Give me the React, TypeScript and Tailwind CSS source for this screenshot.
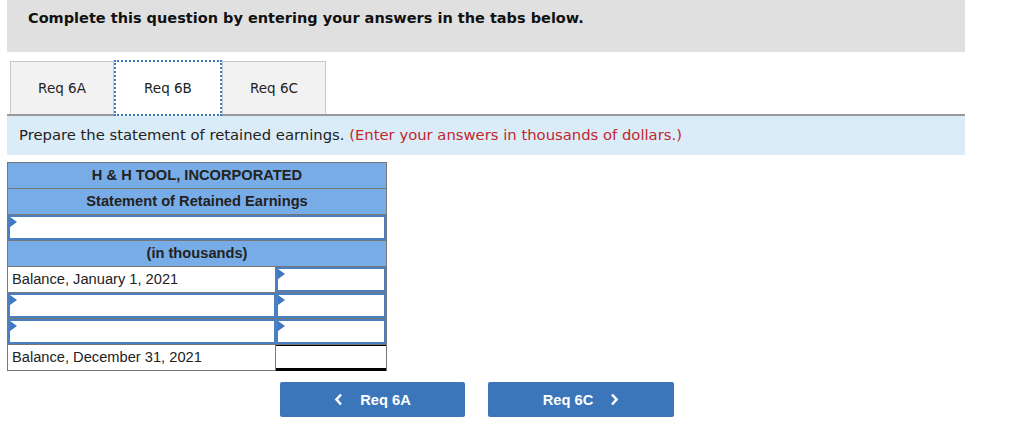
import React from "react";

const Tri = () => (
  <span className="absolute left-0 top-0 w-0 h-0 border-t-[5px] border-b-[5px] border-l-[7px] border-t-transparent border-b-transparent border-l-[#3d78c0]" />
);

const InputCell = ({ cls }: { cls: string }) => (
  <div className={`relative border-2 border-[#4a7fc1] bg-white ${cls}`}>
    <Tri />
  </div>
);

const ChevL = () => (
  <svg width="9" height="13" viewBox="0 0 9 13" className="mr-[17px]">
    <path d="M7 1.5 L2.5 6.5 L7 11.5" fill="none" stroke="white" strokeWidth="2.6" />
  </svg>
);
const ChevR = () => (
  <svg width="9" height="13" viewBox="0 0 9 13" className="ml-[17px]">
    <path d="M2 1.5 L6.5 6.5 L2 11.5" fill="none" stroke="white" strokeWidth="2.6" />
  </svg>
);

export default function App() {
  const verdana = { fontFamily: '"DejaVu Sans", Verdana, sans-serif' };
  const arial = { fontFamily: '"Liberation Sans", Arial, sans-serif' };
  return (
    <div className="w-[1034px] h-[435px] bg-white relative" style={verdana}>
      <div className="ml-[7px] w-[958px] h-[52px] bg-[#e0e0e0] pl-[21px] pt-[8px]">
        <div className="text-[14.5px] font-bold text-[#111]">
          Complete this question by entering your answers in the tabs below.
        </div>
      </div>
      <div className="ml-[7px] w-[958px] mt-[9px]">
        <div className="flex pl-[3px] h-[53px]">
          <div className="w-[104px] h-[53px] bg-[#f2f2f2] border border-[#c8c8c8] border-b-0 flex items-center justify-center text-[13.5px] text-[#222]">
            Req 6A
          </div>
          <div className="w-[108px] h-[56px] -mt-[1px] bg-white border-2 border-dotted border-[#3a78c4] flex items-center justify-center text-[13.5px] text-[#222] relative z-10">
            Req 6B
          </div>
          <div className="w-[104px] h-[53px] bg-[#f2f2f2] border border-[#c8c8c8] border-b-0 flex items-center justify-center text-[13.5px] text-[#222]">
            Req 6C
          </div>
        </div>
        <div className="border-t-2 border-[#999] bg-[#dbecf9] h-[41px] pl-[12px] flex items-center text-[14.8px] text-[#222]">
          <span>Prepare the statement of retained earnings.&nbsp;</span>
          <span className="text-[#c1272d]">(Enter your answers in thousands of dollars.)</span>
        </div>
      </div>

      <div className="ml-[7px] mt-[7px] w-[380px] border border-[#777] border-b-0" style={arial}>
        <div className="h-[26px] bg-[#78ace6] border-b border-[#777] flex items-center justify-center text-[14.67px] font-bold text-[#222] pb-[1px]">
          H &amp; H TOOL, INCORPORATED
        </div>
        <div className="h-[26px] bg-[#78ace6] border-b border-[#777] flex items-center justify-center text-[14.67px] font-bold text-[#222] pb-[1px]">
          Statement of Retained Earnings
        </div>
        <div className="h-[26px] border-b border-[#777] flex">
          <InputCell cls="flex-1" />
        </div>
        <div className="h-[26px] bg-[#78ace6] border-b border-[#777] flex items-center justify-center text-[14.67px] font-bold text-[#222] pb-[1px]">
          (in thousands)
        </div>
        <div className="h-[26px] border-b border-[#777] flex">
          <div className="w-[268px] border-r border-[#777] flex items-center pl-[4px] text-[14.67px] text-[#222] pb-[1px]">
            Balance, January 1, 2021
          </div>
          <InputCell cls="flex-1" />
        </div>
        <div className="h-[26px] border-b border-[#777] flex">
          <InputCell cls="w-[268px]" />
          <InputCell cls="flex-1" />
        </div>
        <div className="h-[26px] border-b border-[#777] flex">
          <InputCell cls="w-[268px]" />
          <InputCell cls="flex-1" />
        </div>
        <div className="h-[26px] border-b border-[#777] flex">
          <div className="w-[268px] border-r border-[#777] flex items-center pl-[4px] text-[14.67px] text-[#222] pb-[1px]">
            Balance, December 31, 2021
          </div>
          <div className="flex-1 border-t border-black border-b-[3px] border-b-double border-b-black -mb-[1px]" />
        </div>
      </div>

      <div className="flex mt-[11px] ml-[280px] gap-[23px]" style={arial}>
        <div className="w-[185px] h-[35px] bg-[#3a76b9] rounded-[2px] flex items-center justify-center text-white text-[14.67px] font-bold">
          <ChevL />Req 6A
        </div>
        <div className="w-[186px] h-[35px] bg-[#3a76b9] rounded-[2px] flex items-center justify-center text-white text-[14.67px] font-bold">
          Req 6C<ChevR />
        </div>
      </div>
    </div>
  );
}
